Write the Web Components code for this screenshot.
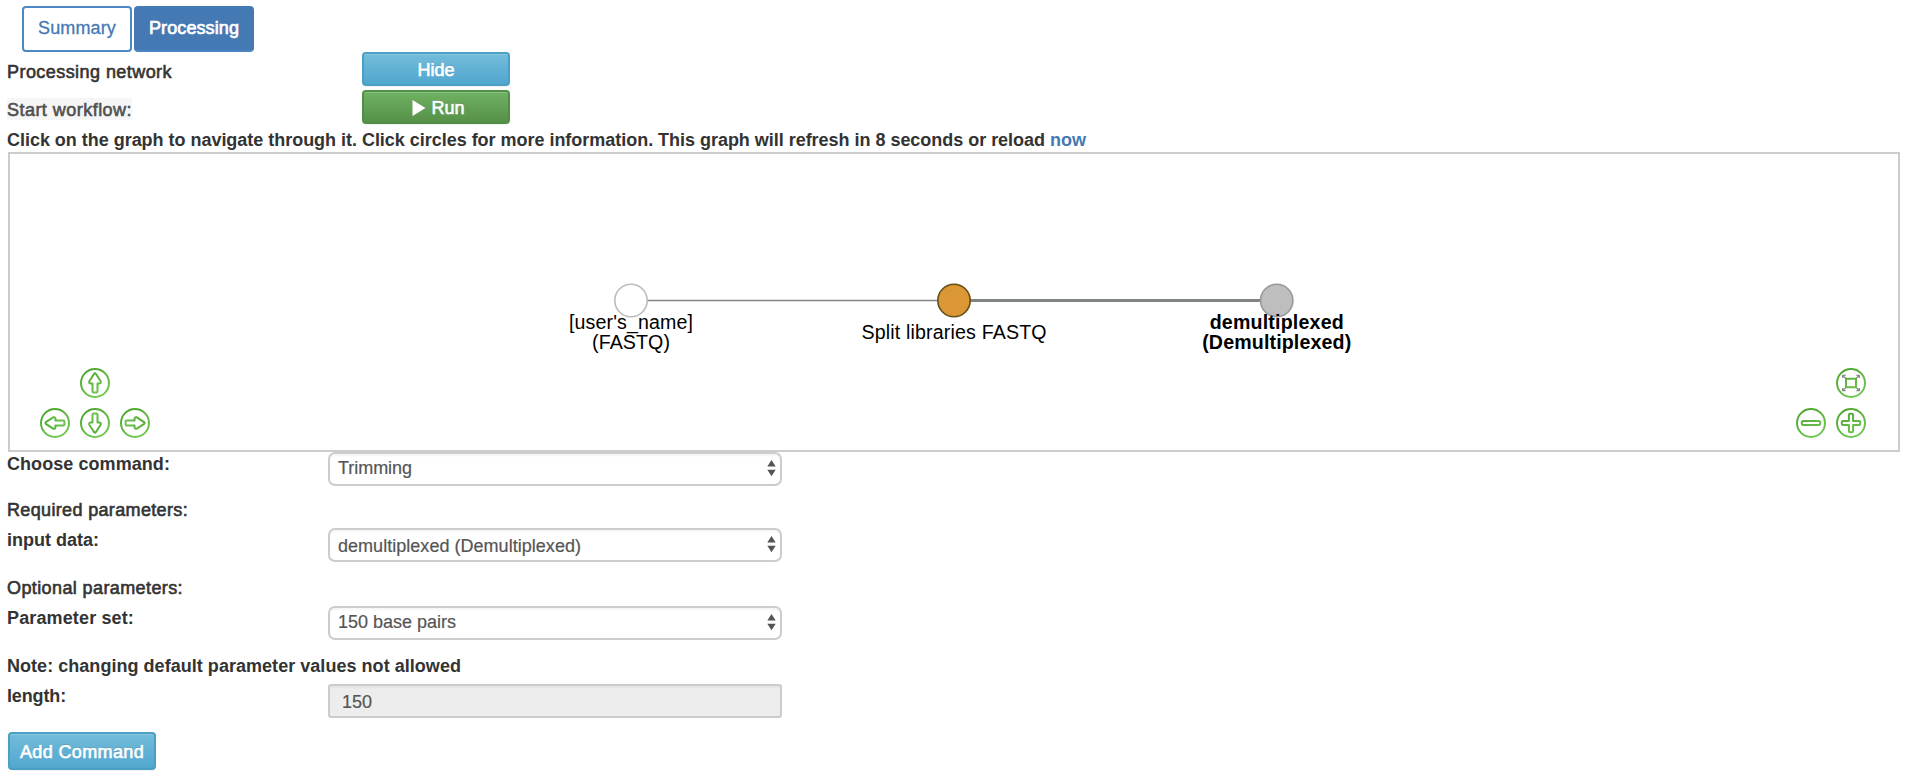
<!DOCTYPE html>
<html lang="en">
<head>
<meta charset="utf-8">
<title>Processing</title>
<style>
html,body{margin:0;background:#fff;}
body{width:1922px;height:784px;overflow:hidden;font:18px/20px "Liberation Sans",Arial,sans-serif;color:#333;}
</style>
</head>
<body>
<processing-page></processing-page>
<script>
function define(name, html, setup) {
  const t = document.createElement('template');
  t.innerHTML = html;
  customElements.define(name, class extends HTMLElement {
    connectedCallback() {
      if (this.shadowRoot) return;
      this.attachShadow({ mode: 'open' }).append(t.content.cloneNode(true));
      if (setup) setup(this, this.shadowRoot);
    }
  });
}

/* Text run tracked to a given advance width (attribute w) */
define('fit-text', `<style>
:host{display:inline-block;white-space:pre;line-height:20px;height:20px}
:host([weight=medium]){-webkit-text-stroke:.6px currentColor}
:host([weight=bold]){font-weight:bold}
span{display:inline-block}
</style><span><slot></slot></span>`, (el, root) => {
  const s = root.querySelector('span');
  const w = +el.getAttribute('w');
  const n = el.textContent.length;
  if (w) {
    s.style.letterSpacing = (w - s.getBoundingClientRect().width) / n + 'px';
    el.style.width = w + 'px';
  }
});

define('tab-button', `<style>
:host{display:flex;box-sizing:border-box;height:46px;border:2px solid #4c88c4;border-radius:4px;background:#fff;color:#4479b3;padding:10px 0 0 14px;-webkit-text-stroke:.3px currentColor}
:host([active]){background:#4479b3;color:#fff;border-color:#4479b3 #4479b3 #4a84c4;padding-left:13px;-webkit-text-stroke:.7px #fff}
</style><slot></slot>`);

define('action-button', `<style>
:host{display:flex;box-sizing:border-box;justify-content:center;align-items:flex-start;width:148px;height:34px;padding-top:6px;border:2px solid #4a9fc4;border-radius:4px;color:#fff;background:linear-gradient(#73bcda,#51a7cf);box-shadow:inset 0 1px 0 rgba(255,255,255,.2),0 1px 2px rgba(0,0,0,.06);text-shadow:0 -1px 0 rgba(0,0,0,.22);-webkit-text-stroke:.6px #fff}
:host([kind=run]){border-color:#528f46;background:linear-gradient(#70b163,#559148);padding-left:4px}
:host([size=large]){height:38px;padding-top:8px}
svg{display:none;width:14px;height:18px;margin:1px 6px 0 0}
:host([kind=run]) svg{display:block}
</style><svg viewBox="0 0 14 18"><path d="M.5 1 13.5 9 .5 17z" fill="#fff"/></svg><slot></slot>`);

define('select-box', `<style>
:host{display:flex;box-sizing:border-box;width:454px;height:34px;border:2px solid #ccc;border-radius:7px;background:#fff;color:#555;padding:4px 4px 0 8px;justify-content:space-between;box-shadow:inset 0 2px 2px rgba(0,0,0,.04)}
svg{width:9px;height:17px;margin-top:2px;flex:none}
:host([low]){padding-top:6px}
:host([low]) svg{margin-top:0}
fit-text,::slotted(*){-webkit-text-stroke:.2px currentColor}
</style><slot></slot><svg viewBox="0 0 9 17"><path d="M.3 6.4 4.5 0 8.7 6.4zM.3 9.8h8.4L4.5 16.2z" fill="#555"/></svg>`);

define('value-input', `<style>
:host{display:flex;box-sizing:border-box;width:454px;height:34px;border:2px solid #ccc;border-radius:3px;background:#ededed;color:#555;padding:6px 0 0 12px;box-shadow:inset 0 2px 2px rgba(0,0,0,.04);-webkit-text-stroke:.2px #555}
</style><slot></slot>`);

define('form-row', `<style>
:host{display:grid;grid-template-columns:320px auto;justify-content:start;align-items:start}
:host([wide]){grid-template-columns:354px auto}
.l{display:flex;padding-top:var(--label-top,2px)}
</style><div class="l"><slot name="label"></slot></div><slot></slot>`);

const ARROW = 'M-.8 -9.2 Q0 -10 .8 -9.2 L5.7 -1.8 Q6.3 .2 4.6 .4 L2.5 .4 V8.3 Q2.4 9.4 1.4 9.4 H-1.4 Q-2.4 9.4 -2.5 8.3 V.4 L-4.6 .4 Q-6.3 .2 -5.7 -1.8z';
const GLYPHS = {
  up: `<path d="${ARROW}"/>`,
  down: `<path d="${ARROW}" transform="rotate(180)"/>`,
  left: `<path d="${ARROW}" transform="rotate(-90)"/>`,
  right: `<path d="${ARROW}" transform="rotate(90)"/>`,
  minus: '<rect x="-9.2" y="-2" width="18.4" height="4" rx="1.5"/>',
  plus: '<path d="M-1.1-9.2H1.1Q2.1-9.2 2.1-8.2V-2.1H8.2Q9.2-2.1 9.2-1.1V1.1Q9.2 2.1 8.2 2.1H2.1V8.2Q2.1 9.2 1.1 9.2H-1.1Q-2.1 9.2-2.1 8.2V2.1H-8.2Q-9.2 2.1-9.2 1.1V-1.1Q-9.2-2.1-8.2-2.1H-2.1V-8.2Q-2.1-9.2-1.1-9.2z"/>',
  fit: '<rect x="-5" y="-4.3" width="10" height="8.6"/><path stroke="#888" stroke-width="1.3" d="M-5.3-4.7-8.4-7.6M-8.4-4.9V-7.7H-5.4M5.3-4.7 8.4-7.6M8.4-4.9V-7.7H5.4M-5.3 4.7-8.4 7.6M-8.4 4.9V7.7H-5.4M5.3 4.7 8.4 7.6M8.4 4.9V7.7H5.4"/>'
};
define('nav-button', `<style>:host{display:block;width:30px;height:30px}svg{display:block}</style>
<svg width="30" height="30" viewBox="-15 -15 30 30" fill="none" stroke="url(#g)" stroke-width="2" stroke-linejoin="round">
<defs><linearGradient id="g" gradientUnits="userSpaceOnUse" x1="-8" y1="-14" x2="8" y2="14"><stop offset="0" stop-color="#4ba52f"/><stop offset="1" stop-color="#75ca54"/></linearGradient></defs>
<circle r="14"/><g></g></svg>`, (el, root) => {
  root.querySelector('g').innerHTML = GLYPHS[el.getAttribute('icon')];
});

define('nav-pad', `<style>
:host{position:absolute;bottom:12px;display:grid;grid-auto-columns:30px;grid-template-rows:30px 30px;gap:10px}
:host([side=left]){left:30px}
:host([side=right]){right:32px}
</style><slot></slot>`);

define('network-graph', `<style>
:host{display:block;position:relative;box-sizing:border-box;width:1892px;height:300px;border:2px solid #ccc;background:#fff}
.net{display:block;font:19.6px "Liberation Sans",Arial,sans-serif}
</style>
<svg class="net" width="1888" height="296" viewBox="10 154 1888 296">
<path d="M631 300.5H954" stroke="#848484" stroke-width="1.4"/><path d="M954 300.5H1277" stroke="#808482" stroke-width="2.8"/>
<circle cx="631" cy="300.5" r="16.2" fill="#fff" stroke="#bcbcbc" stroke-width="1.6"/>
<circle cx="954" cy="300.5" r="16.2" fill="#da9734" stroke="#635018" stroke-width="1.6"/>
<circle cx="1276.7" cy="300.5" r="16.2" fill="#bebebe" stroke="#999" stroke-width="1.6"/>
<g fill="#000" text-anchor="middle">
<text x="631" y="329" textLength="124">[user's_name]</text><text x="631" y="349" textLength="78">(FASTQ)</text>
<text x="954" y="339" textLength="185">Split libraries FASTQ</text>
<g font-weight="bold"><text x="1276.7" y="329" textLength="134">demultiplexed</text><text x="1276.7" y="349" textLength="149">(Demultiplexed)</text></g>
</g></svg>
<nav-pad side="left">
<nav-button icon="up" style="grid-area:1/2"></nav-button><nav-button icon="left" style="grid-area:2/1"></nav-button><nav-button icon="down" style="grid-area:2/2"></nav-button><nav-button icon="right" style="grid-area:2/3"></nav-button>
</nav-pad>
<nav-pad side="right">
<nav-button icon="fit" style="grid-area:1/2"></nav-button><nav-button icon="minus" style="grid-area:2/1"></nav-button><nav-button icon="plus" style="grid-area:2/2"></nav-button>
</nav-pad>`);

define('processing-page', `<style>
:host{display:flex;flex-direction:column;align-items:flex-start;padding:6px 0 0 8px}
.tabs{display:flex;gap:2px;margin-left:14px}
.run{margin-top:4px}
.mark{background:#f6f6f6;color:#505050;height:22px;margin-top:-2px;padding-top:2px;box-sizing:border-box}
.msg{display:flex;margin:6px 0 2px -1px}
.now{color:#4479b3}
.t{display:flex}
</style>
<div class="tabs">
<tab-button style="width:110px"><fit-text w="78">Summary</fit-text></tab-button>
<tab-button active style="width:120px"><fit-text w="90">Processing</fit-text></tab-button>
</div>
<form-row wide style="--label-top:10px"><fit-text slot="label" weight="medium" w="165" style="margin-left:-1px">Processing network</fit-text><action-button><fit-text w="37">Hide</fit-text></action-button></form-row>
<form-row wide class="run" style="--label-top:10px"><fit-text slot="label" weight="medium" class="mark" w="125" style="margin-left:-1px">Start workflow:</fit-text><action-button kind="run"><fit-text w="33">Run</fit-text></action-button></form-row>
<div class="msg"><fit-text weight="bold" w="1043">Click on the graph to navigate through it. Click circles for more information. This graph will refresh in 8 seconds or reload </fit-text><fit-text weight="bold" class="now" w="36">now</fit-text></div>
<network-graph></network-graph>
<form-row><fit-text slot="label" weight="bold" w="163" style="margin-left:-1px">Choose command:</fit-text><select-box><fit-text w="74">Trimming</fit-text></select-box></form-row>
<div class="t" style="margin:14px 0 8px -1px"><fit-text weight="medium" w="181">Required parameters:</fit-text></div>
<form-row><fit-text slot="label" weight="bold" w="92" style="margin-left:-1px">input data:</fit-text><select-box low><fit-text w="243">demultiplexed (Demultiplexed)</fit-text></select-box></form-row>
<div class="t" style="margin:16px 0 8px -1px"><fit-text weight="medium" w="176">Optional parameters:</fit-text></div>
<form-row><fit-text slot="label" weight="bold" w="127" style="margin-left:-1px">Parameter set:</fit-text><select-box><fit-text w="118">150 base pairs</fit-text></select-box></form-row>
<div class="t" style="margin:16px 0 8px -1px"><fit-text weight="bold" w="454">Note: changing default parameter values not allowed</fit-text></div>
<form-row><fit-text slot="label" weight="bold" w="59" style="margin-left:-1px">length:</fit-text><value-input><fit-text w="30">150</fit-text></value-input></form-row>
<action-button size="large" style="margin-top:14px"><fit-text w="124">Add Command</fit-text></action-button>`);
</script>
</body>
</html>
